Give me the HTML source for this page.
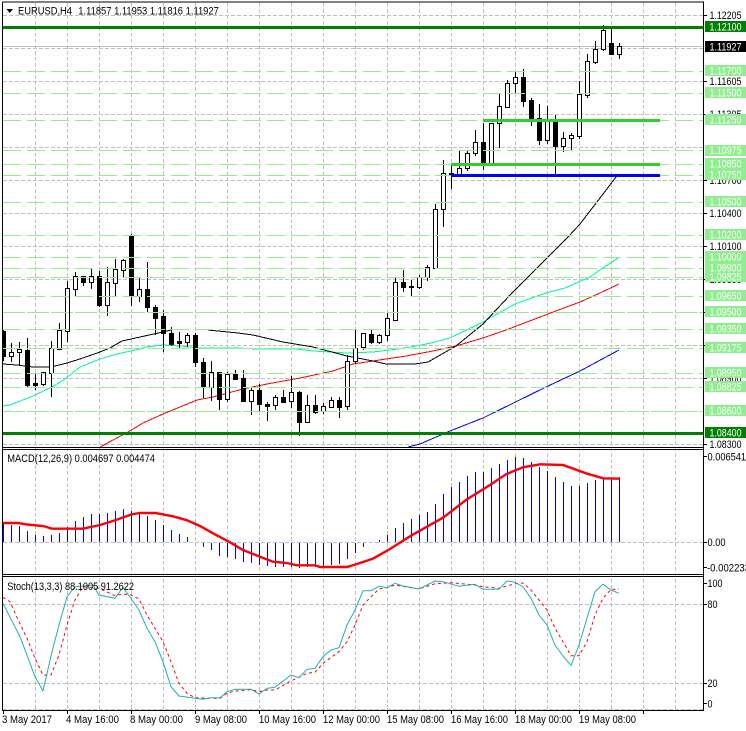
<!DOCTYPE html>
<html><head><meta charset="utf-8"><title>EURUSD,H4</title>
<style>
html,body{margin:0;padding:0;background:#fff;width:746px;height:731px;overflow:hidden}
svg{display:block}
text{font-family:"Liberation Sans",sans-serif;font-size:11px;fill:#000}
.w text,text.w{fill:#fff}
</style></head><body>
<svg width="746" height="731" viewBox="0 0 746 731" xmlns="http://www.w3.org/2000/svg">
<defs><clipPath id="c"><rect x="3" y="3" width="700" height="444"/></clipPath></defs>
<rect width="746" height="731" fill="#fff"/>

<!-- grid -->
<g stroke="#c0c0c0" fill="none" stroke-dasharray="4 2" shape-rendering="crispEdges">
<path d="M35.5 3V710M67.5 3V710M99.5 3V710M131.5 3V710M163.5 3V710M195.5 3V710M227.5 3V710M259.5 3V710M291.5 3V710M323.5 3V710M355.5 3V710M387.5 3V710M419.5 3V710M451.5 3V710M483.5 3V710M515.5 3V710M547.5 3V710M579.5 3V710M611.5 3V710M643.5 3V710M675.5 3V710"/>
<path d="M3 15.5H703M3 48.5H703M3 81.5H703M3 114.5H703M3 147.5H703M3 180.5H703M3 213.5H703M3 246.5H703M3 279.5H703M3 312.5H703M3 345.5H703M3 378.5H703M3 411.5H703M3 444.5H703M3 542.5H703M3 604.5H703M3 683.5H703M3 709.5H703"/>
</g>
<path d="M3 46.5H703" stroke="#c0c0c0" fill="none" shape-rendering="crispEdges"/>

<g clip-path="url(#c)" fill="none" shape-rendering="crispEdges">
<!-- moving averages -->
<polyline stroke="#00fa9a" points="3,406 10,405 33,396 52,387 65,379 80,367 100,359 117,354 140,349 146,347 163,345 180,346 200,348 238,348 257,349 295,349 313,351 347,353 373,352 398,349 411,347 431,343 450,338 483,322 515,304 546,293 565,288 590,277 603,268 618,258"/>
<polyline stroke="#f00" points="100,447 128,432 143,423 163,414 197,400 213,397 243,389 267,384 300,378 333,371 353,364 373,361 406,356 433,351 456,346 483,338 506,330 548,314 580,302 600,293 619,284"/>
<polyline stroke="#00f" points="408,447 420,444 450,431 483,418 546,387 580,371 619,350"/>
<polyline stroke="#000" points="3,364 17,365 33,367 51,367 67,363 80,359 100,352 110,348 122,341 140,337 163,332 171,330"/>
<polyline stroke="#000" points="208,330 238,333 253,335 283,342 313,347 347,356 373,361 386,364 415,364 428,362 456,346 483,324 511,294 530,275 560,245 568,237 580,224 600,198 616,177"/>

<!-- wicks -->
<path stroke="#000" d="M3.5 329V361M11.5 343V362M19.5 342V366M27.5 338V388M35.5 374V390M43.5 372V386M51.5 341V397M59.5 323V350M67.5 281V342M75.5 272V297M83.5 276V286M91.5 269V289M99.5 271V307M107.5 267V316M115.5 259V297M123.5 259V277M131.5 234V306M139.5 277V302M147.5 262V313M155.5 305V335M163.5 310V352M171.5 327V346M179.5 332V349M187.5 333V347M195.5 333V367M203.5 358V398M211.5 361V401M219.5 372V410M227.5 372V402M235.5 370V379M243.5 370V402M251.5 387V415M259.5 384V411M267.5 402V421M275.5 395V410M283.5 390V403M291.5 376V408M299.5 391V436M307.5 395V422M315.5 395V414M323.5 403V414M331.5 397V408M339.5 397V418M347.5 355V410M355.5 330V364M363.5 333V350M371.5 329V344M379.5 334V344M387.5 313V341M395.5 278V320M403.5 270V292M411.5 280V297M419.5 275V289M427.5 265V281M435.5 204V268M443.5 160V227M451.5 163V189M459.5 151V176M467.5 151V171M475.5 130V156M483.5 123V170M491.5 123V165M499.5 93V148M507.5 80V108M515.5 71V94M523.5 69V107M531.5 98V126M539.5 104V145M547.5 106V144M555.5 115V175M563.5 132V152M571.5 133V150M579.5 81V139M587.5 54V98M595.5 41V64M603.5 25V51M611.5 27V54M619.5 43V59"/>

<!-- bear bodies -->
<path fill="#000" stroke="#000" d="M1.5 331.5h4v25h-4zM25.5 350.5h4v35h-4zM33.5 383.5h4v2h-4zM81.5 276.5h4v6h-4zM97.5 276.5h4v29h-4zM129.5 236.5h4v60h-4zM145.5 289.5h4v18h-4zM153.5 307.5h4v11h-4zM161.5 316.5h4v17h-4zM169.5 333.5h4v11h-4zM177.5 341.5h4v2h-4zM193.5 335.5h4v27h-4zM201.5 362.5h4v25h-4zM217.5 372.5h4v27h-4zM233.5 374.5h4v5h-4zM241.5 378.5h4v23h-4zM257.5 390.5h4v14h-4zM265.5 404.5h4v2h-4zM281.5 397.5h4v5h-4zM297.5 392.5h4v30h-4zM313.5 405.5h4v7h-4zM337.5 400.5h4v7h-4zM369.5 334.5h4v8h-4zM401.5 282.5h4v5h-4zM409.5 286.5h4v1h-4zM449.5 173.5h4v2h-4zM481.5 142.5h4v23h-4zM521.5 77.5h4v24h-4zM529.5 100.5h4v19h-4zM537.5 118.5h4v22h-4zM553.5 121.5h4v25h-4zM609.5 43.5h4v11h-4z"/>
<!-- bull bodies -->
<path fill="#fff" stroke="#000" d="M9.5 352.5h4v4h-4zM17.5 349.5h4v3h-4zM41.5 372.5h4v12h-4zM49.5 348.5h4v25h-4zM57.5 330.5h4v19h-4zM65.5 288.5h4v43h-4zM73.5 276.5h4v13h-4zM89.5 276.5h4v6h-4zM105.5 282.5h4v23h-4zM113.5 269.5h4v14h-4zM121.5 260.5h4v10h-4zM137.5 289.5h4v7h-4zM185.5 335.5h4v7h-4zM209.5 372.5h4v15h-4zM225.5 374.5h4v25h-4zM249.5 390.5h4v11h-4zM273.5 397.5h4v8h-4zM289.5 392.5h4v9h-4zM305.5 405.5h4v17h-4zM321.5 406.5h4v5h-4zM329.5 400.5h4v7h-4zM345.5 361.5h4v45h-4zM353.5 348.5h4v13h-4zM361.5 333.5h4v14h-4zM377.5 335.5h4v7h-4zM385.5 318.5h4v17h-4zM393.5 282.5h4v38h-4zM417.5 277.5h4v10h-4zM425.5 267.5h4v10h-4zM433.5 209.5h4v59h-4zM441.5 173.5h4v36h-4zM457.5 168.5h4v7h-4zM465.5 153.5h4v15h-4zM473.5 142.5h4v11h-4zM489.5 123.5h4v42h-4zM497.5 106.5h4v17h-4zM505.5 83.5h4v24h-4zM513.5 77.5h4v6h-4zM545.5 120.5h4v20h-4zM561.5 138.5h4v8h-4zM569.5 135.5h4v3h-4zM577.5 94.5h4v42h-4zM585.5 61.5h4v34h-4zM593.5 49.5h4v13h-4zM601.5 30.5h4v19h-4zM617.5 46.5h4v8h-4z"/>

<!-- horizontal objects -->
<path stroke="#90ee90" stroke-dasharray="18 6" d="M3 71.5H703M3 93.5H703M3 120.5H703M3 150.5H703M3 164.5H703M3 175.5H703M3 202.5H703M3 235.5H703M3 257.5H703M3 268.5H703M3 277.5H703M3 296.5H703M3 312.5H703M3 329.5H703M3 348.5H703M3 373.5H703M3 387.5H703M3 411.5H703"/>
<path stroke="#008000" stroke-width="3" d="M3 27.5H703M3 433.5H703"/>
<path stroke="#32cd32" stroke-width="3" d="M483 120.5H660M451 164.5H660"/>
<path stroke="#00f" stroke-width="3" d="M451 175.5H660"/>
</g>

<!-- MACD -->
<path stroke="#00f" fill="none" shape-rendering="crispEdges" d="M3.5 523V542M11.5 525V542M19.5 526V542M27.5 531V542M35.5 535V542M43.5 536V542M51.5 535V542M59.5 533V542M67.5 527V542M75.5 521V542M83.5 517V542M91.5 514V542M99.5 514V542M107.5 513V542M115.5 511V542M123.5 509V542M131.5 511V542M139.5 514V542M147.5 516V542M155.5 520V542M163.5 525V542M171.5 530V542M179.5 534V542M187.5 537V542M203.5 543V547M211.5 543V550M219.5 543V556M227.5 543V557M235.5 543V559M243.5 543V562M251.5 543V563M259.5 543V565M267.5 543V566M275.5 543V567M283.5 543V567M291.5 543V567M299.5 543V568M307.5 543V567M315.5 543V567M323.5 543V567M331.5 543V565M339.5 543V564M347.5 543V559M355.5 543V553M363.5 543V547M379.5 540V542M387.5 535V542M395.5 528V542M403.5 523V542M411.5 519V542M419.5 515V542M427.5 512V542M435.5 504V542M443.5 494V542M451.5 487V542M459.5 482V542M467.5 476V542M475.5 472V542M483.5 472V542M491.5 468V542M499.5 464V542M507.5 460V542M515.5 457V542M523.5 458V542M531.5 462V542M539.5 467V542M547.5 471V542M555.5 477V542M563.5 482V542M571.5 486V542M579.5 486V542M587.5 483V542M595.5 480V542M603.5 479V542M611.5 478V542M619.5 477V542"/>
<polyline fill="none" stroke="#f00" stroke-width="2.4" points="3,523 18,523 27,524.5 43,526 52,528.7 83,528.7 100,525 113,521 132,514.3 140,513 155,513 173,516.3 187,520.3 200,526 213,533.3 230,542.3 243,550 260,556.7 273,561.7 287,563 297,565.3 315,565.3 320,567 347,567 357,564 373,558.7 390,549 411,535.7 443,517.7 466,500 490,485 506,474.3 523,467.3 540,464.3 563,465 586,473.3 603,478.3 620,478.7"/>

<!-- Stochastic -->
<polyline fill="none" stroke="#f00" stroke-dasharray="3 3" points="3,597.3 10,601.7 19,621.7 27,638.3 35,658.3 43,675 51,675 59,655 67,625 75,600 83,586.7 99,588.3 115,595.7 123,594 131,595 139,599 147,615 155,628.3 163,641.7 171,661.7 179,683.3 187,693.3 195,697.7 211,698.3 220,698.3 227,693.3 235,691 251,689.7 259,691.7 267,690 275,690 291,681 307,673.3 315,672.3 323,663.3 339,651.7 347,641.7 355,625 363,605 371,596.7 379,589 387,587.7 395,585 411,587.7 419,589 435,583.7 451,582.7 475,585 483,586.7 499,588.3 515,583.7 523,583 531,590 547,610 555,628.3 563,641.7 571,655.7 579,655.7 587,641.7 595,615 603,598.3 611,589.3 619,589.3"/>
<polyline fill="none" stroke="#20b2aa" points="3,603.3 20,636.7 35,676.7 43,691 52,651.7 59,625 67,596.7 75,586.7 93,585 99,595 115,598.3 123,587.3 132,600 139,610 147,628.3 155,641.7 163,661.7 171,686.7 179,696 195,698.3 203,699.3 211,697.7 220,697.7 227,691.7 235,689.3 251,689.3 259,694 267,688.3 275,687.3 291,675 299,677.7 307,669.3 315,668.3 323,656.7 331,650 339,647.7 347,625 355,610 363,590.7 371,590.7 379,586.3 387,587.7 395,583.3 403,586 419,589 435,581 443,581.7 459,586.3 475,584.3 483,589.3 499,589.3 507,581 515,582.3 523,586.7 531,598.3 539,615 547,625 555,645 563,656 571,665.3 579,645 587,618.3 595,591.7 603,584.3 611,590 619,593.3"/>

<!-- frames -->
<g stroke="#000" fill="none" shape-rendering="crispEdges">
<path d="M2.5 2H704M2.5 2V711M703.5 2V711M2 447.5H704M2 449.5H704M2 574.5H704M2 576.5H704M2 710.5H704" stroke-width="1"/>
<path d="M704 15.5h3M704 81.5h3M704 114.5h3M704 180.5h3M704 213.5h3M704 246.5h3M704 279.5h3M704 312.5h3M704 345.5h3M704 378.5h3M704 444.5h3M704 456.5h3M704 542.5h3M704 567.5h3M704 583.5h3M704 604.5h3M704 683.5h3M704 703.5h3"/>
<path d="M3.5 711v3M67.5 711v3M131.5 711v3M195.5 711v3M259.5 711v3M323.5 711v3M387.5 711v3M451.5 711v3M515.5 711v3M579.5 711v3M643.5 711v3"/>
</g>

<!-- top labels -->
<polygon points="6.5,9 13,9 9.7,13" fill="#000"/>
<text x="18" y="14.5" textLength="54" lengthAdjust="spacingAndGlyphs">EURUSD,H4</text>
<text x="78.3" y="14.5" textLength="140.5" lengthAdjust="spacingAndGlyphs">1.11857 1.11953 1.11816 1.11927</text>
<text x="7.3" y="462" textLength="147.7" lengthAdjust="spacingAndGlyphs">MACD(12,26,9) 0.004697 0.004474</text>
<text x="7.3" y="590" textLength="126.7" lengthAdjust="spacingAndGlyphs">Stoch(13,3,3) 88.1005 91.2622</text>

<!-- axis black labels -->
<g>
<text x="709.5" y="19" textLength="32" lengthAdjust="spacingAndGlyphs">1.12205</text>
<text x="709.5" y="85" textLength="32" lengthAdjust="spacingAndGlyphs">1.11605</text>
<text x="709.5" y="118" textLength="32" lengthAdjust="spacingAndGlyphs">1.11305</text>
<text x="709.5" y="184" textLength="32" lengthAdjust="spacingAndGlyphs">1.10700</text>
<text x="709.5" y="217" textLength="32" lengthAdjust="spacingAndGlyphs">1.10400</text>
<text x="709.5" y="250" textLength="32" lengthAdjust="spacingAndGlyphs">1.10100</text>
<text x="709.5" y="283" textLength="32" lengthAdjust="spacingAndGlyphs">1.09800</text>
<text x="709.5" y="382" textLength="32" lengthAdjust="spacingAndGlyphs">1.08900</text>
<text x="709.5" y="448" textLength="32" lengthAdjust="spacingAndGlyphs">1.08300</text>
<text x="707.5" y="460.5" textLength="38.5" lengthAdjust="spacingAndGlyphs">0.006541</text>
<text x="707.5" y="546" textLength="18" lengthAdjust="spacingAndGlyphs">0.00</text>
<text x="707" y="571.5" textLength="43" lengthAdjust="spacingAndGlyphs">-0.002233</text>
<text x="707.5" y="587" textLength="15" lengthAdjust="spacingAndGlyphs">100</text>
<text x="707.5" y="608" textLength="10" lengthAdjust="spacingAndGlyphs">80</text>
<text x="707.5" y="687" textLength="10" lengthAdjust="spacingAndGlyphs">20</text>
<text x="707.5" y="707.5" textLength="5" lengthAdjust="spacingAndGlyphs">0</text>
</g>

<!-- label boxes -->
<g fill="#90ee90" shape-rendering="crispEdges">
<rect x="705" y="65" width="41" height="11"/><rect x="705" y="87" width="41" height="11"/>
<rect x="705" y="114" width="41" height="11"/><rect x="705" y="145" width="41" height="11"/>
<rect x="705" y="158" width="41" height="11"/><rect x="705" y="169" width="41" height="11"/>
<rect x="705" y="196" width="41" height="11"/><rect x="705" y="229" width="41" height="11"/>
<rect x="705" y="251" width="41" height="11"/><rect x="705" y="262" width="41" height="11"/>
<rect x="705" y="271" width="41" height="11"/><rect x="705" y="290" width="41" height="11"/>
<rect x="705" y="306" width="41" height="11"/><rect x="705" y="323" width="41" height="11"/>
<rect x="705" y="342" width="41" height="11"/><rect x="705" y="367" width="41" height="11"/>
<rect x="705" y="381" width="41" height="11"/><rect x="705" y="405" width="41" height="11"/>
<rect x="705" y="21" width="41" height="11" fill="#008000"/>
<rect x="705" y="427" width="41" height="11" fill="#008000"/>
<rect x="705" y="41" width="41" height="11" fill="#000"/>
</g>
<g class="w">
<text x="709.5" y="30.5" textLength="32" lengthAdjust="spacingAndGlyphs">1.12100</text>
<text x="709.5" y="50.5" textLength="32" lengthAdjust="spacingAndGlyphs">1.11927</text>
<text x="709.5" y="74.5" textLength="32" lengthAdjust="spacingAndGlyphs">1.11700</text>
<text x="709.5" y="96.5" textLength="32" lengthAdjust="spacingAndGlyphs">1.11500</text>
<text x="709.5" y="123.5" textLength="32" lengthAdjust="spacingAndGlyphs">1.11250</text>
<text x="709.5" y="154" textLength="32" lengthAdjust="spacingAndGlyphs">1.10975</text>
<text x="709.5" y="167.5" textLength="32" lengthAdjust="spacingAndGlyphs">1.10850</text>
<text x="709.5" y="178.5" textLength="32" lengthAdjust="spacingAndGlyphs">1.10750</text>
<text x="709.5" y="205.5" textLength="32" lengthAdjust="spacingAndGlyphs">1.10500</text>
<text x="709.5" y="238.5" textLength="32" lengthAdjust="spacingAndGlyphs">1.10200</text>
<text x="709.5" y="260.5" textLength="32" lengthAdjust="spacingAndGlyphs">1.10000</text>
<text x="709.5" y="271.5" textLength="32" lengthAdjust="spacingAndGlyphs">1.09900</text>
<text x="709.5" y="280.5" textLength="32" lengthAdjust="spacingAndGlyphs">1.09825</text>
<text x="709.5" y="299.5" textLength="32" lengthAdjust="spacingAndGlyphs">1.09650</text>
<text x="709.5" y="315.5" textLength="32" lengthAdjust="spacingAndGlyphs">1.09500</text>
<text x="709.5" y="332.5" textLength="32" lengthAdjust="spacingAndGlyphs">1.09350</text>
<text x="709.5" y="351.5" textLength="32" lengthAdjust="spacingAndGlyphs">1.09175</text>
<text x="709.5" y="376.5" textLength="32" lengthAdjust="spacingAndGlyphs">1.08950</text>
<text x="709.5" y="390.5" textLength="32" lengthAdjust="spacingAndGlyphs">1.08825</text>
<text x="709.5" y="414.5" textLength="32" lengthAdjust="spacingAndGlyphs">1.08600</text>
<text x="709.5" y="436.5" textLength="32" lengthAdjust="spacingAndGlyphs">1.08400</text>
</g>

<!-- date labels -->
<g>
<text x="2" y="723" textLength="50" lengthAdjust="spacingAndGlyphs">3 May 2017</text>
<text x="66" y="723" textLength="53" lengthAdjust="spacingAndGlyphs">4 May 16:00</text>
<text x="130" y="723" textLength="53" lengthAdjust="spacingAndGlyphs">8 May 00:00</text>
<text x="195" y="723" textLength="52" lengthAdjust="spacingAndGlyphs">9 May 08:00</text>
<text x="259" y="723" textLength="57" lengthAdjust="spacingAndGlyphs">10 May 16:00</text>
<text x="323" y="723" textLength="57" lengthAdjust="spacingAndGlyphs">12 May 00:00</text>
<text x="387" y="723" textLength="57" lengthAdjust="spacingAndGlyphs">15 May 08:00</text>
<text x="451" y="723" textLength="57" lengthAdjust="spacingAndGlyphs">16 May 16:00</text>
<text x="515" y="723" textLength="57" lengthAdjust="spacingAndGlyphs">18 May 00:00</text>
<text x="579" y="723" textLength="57" lengthAdjust="spacingAndGlyphs">19 May 08:00</text>
</g>
</svg>
</body></html>
